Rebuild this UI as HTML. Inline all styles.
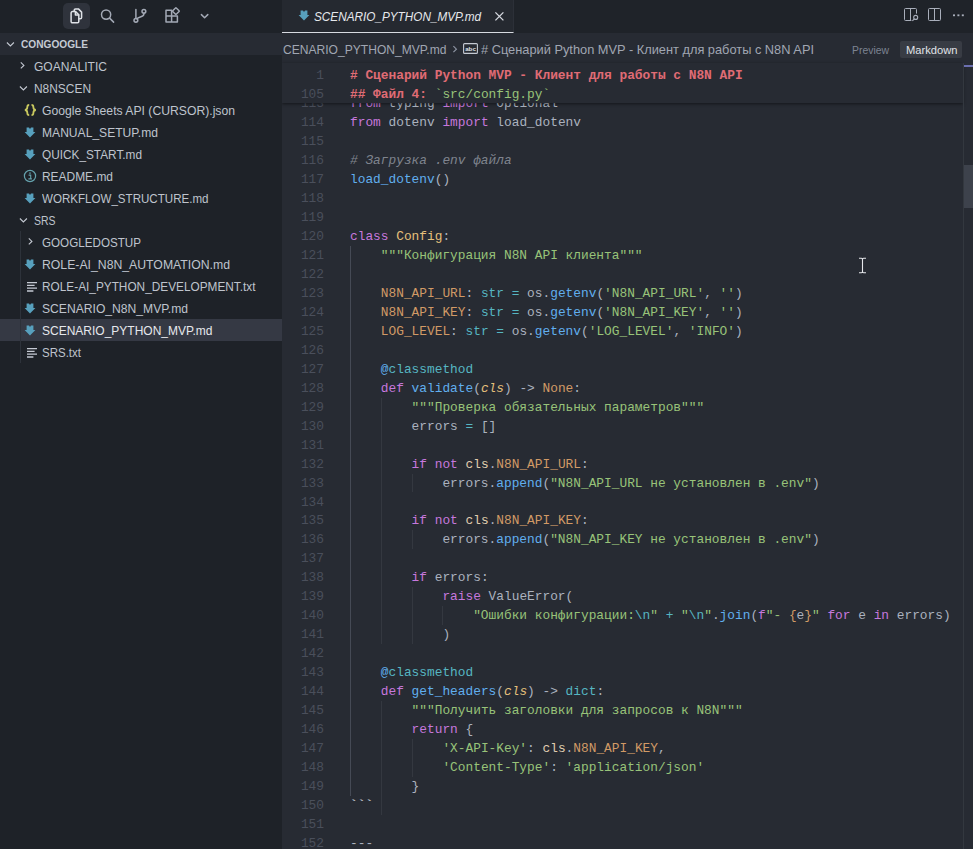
<!DOCTYPE html>
<html lang="en">
<head>
<meta charset="utf-8">
<title>SCENARIO_PYTHON_MVP.md</title>
<style>
*{box-sizing:border-box;margin:0;padding:0}
html,body{width:973px;height:849px;overflow:hidden;background:#272b33}
body{position:relative;font-family:"Liberation Sans",sans-serif;color:#abb2bf}
#side{position:absolute;left:0;top:0;width:282px;height:849px;background:#1e2228;overflow:hidden}
#acts{position:absolute;left:0;top:0;width:282px;height:33px;background:#1e2228}
#acts .sel{position:absolute;left:63px;top:3px;width:27px;height:26px;border-radius:5px;background:#2f333c}
#acts svg{position:absolute}
#hdr{position:absolute;left:0;top:33px;width:282px;height:22px;background:#272b33}
#hdr svg{position:absolute}
#hdr span{position:absolute;left:20.5px;top:0;line-height:22px;font-size:11px;font-weight:bold;color:#c5cad3;white-space:nowrap}
.row{position:absolute;left:0;width:282px;height:22px;line-height:22px;font-size:13px;color:#bfc4cd;white-space:nowrap}
.row.sel{background:#353944;color:#e6e8ec}
.row .lbl{position:absolute;top:1px}
.row svg{position:absolute}
.guide{position:absolute;width:1px;background:#2d323a}
#ed{position:absolute;left:282px;top:0;width:691px;height:849px;background:#272b33;overflow:hidden}
#tabs{position:absolute;left:0;top:0;width:691px;height:33px;background:#1f2329}
#tab{position:absolute;left:0;top:0;width:232px;height:33px;background:#252930;border-right:1px solid #2c3038;border-bottom:1px solid #d7dae0}
#tab svg{position:absolute}
#tab .name{position:absolute;left:32px;top:0;line-height:33px;font-size:13px;font-style:italic;color:#e6e8ec;white-space:nowrap}
#crumbs{position:absolute;left:0;top:33px;width:691px;height:30px;background:#272b33;font-size:13px;color:#a0a6b2;white-space:nowrap}
#crumbs span{position:absolute;top:1.5px;line-height:30px}
.code{font-family:"Liberation Mono",monospace;font-size:12.83px;line-height:19px;white-space:pre}
.ln{position:absolute;left:0;width:42px;text-align:right;color:#4a4f5b;height:19px}
.cl{position:absolute;left:68px;height:19px;color:#abb2bf}
#scroll{position:absolute;left:0;top:0;width:691px;height:849px}
#sticky{position:absolute;left:0;top:63px;width:681px;height:40px;background:#272b33;box-shadow:0 1px 3px rgba(0,0,0,.5)}
.ig{position:absolute;width:1px;background:#343840}
#sb{position:absolute;left:681px;top:63px;width:10px;height:786px;border-left:1px solid #33383f}
#sb .mark{position:absolute;left:0;top:2px;width:10px;height:2px;background:#6b6fb0}
#sb .thumb{position:absolute;left:0;top:102px;width:10px;height:43px;background:#3d424c}
#ibeam{position:absolute;left:576px;top:256.5px}
.k{color:#c678dd}.y{color:#e5c07b}.s{color:#98c379}.f{color:#61afef}.o{color:#d19a66}
.c{color:#7f848e;font-style:italic}.r{color:#e06c75}.t{color:#56b6c2}.i{color:#e5c07b;font-style:italic}
.h{color:#e06c75;font-weight:bold}.cl2{color:#e0ceb0}
</style>
</head>
<body>
<div id="side">
<div id="acts"><div class="sel"></div>
<svg style="left:0;top:0" width="282" height="33" viewBox="0 0 282 33" fill="none" stroke-linecap="round" stroke-linejoin="round">
<g stroke="#dfe2e7" stroke-width="1.5">
<path d="M74.2 11.2 V10.2 A1.3 1.3 0 0 1 75.5 8.9 H78.4 L81.6 12.1 V17.5 A1.3 1.3 0 0 1 80.3 18.8 H79.2"/>
<path d="M72.4 11.6 H75.6 L78.8 14.8 V21.5 A1.3 1.3 0 0 1 77.5 22.8 H72.4 A1.3 1.3 0 0 1 71.1 21.5 V12.9 A1.3 1.3 0 0 1 72.4 11.6 Z"/>
<path d="M75.4 11.8 V15 H78.6"/>
</g>
<g stroke="#a3a9b5" stroke-width="1.5">
<circle cx="106.1" cy="14.6" r="4.6"/><path d="M109.6 18.1 L113.6 22.1"/>
<circle cx="135.9" cy="20.3" r="1.9"/><circle cx="143.9" cy="11.3" r="1.9"/>
<path d="M135.9 18.4 V9.6 M143.9 13.2 V14 C143.9 17.4 138.4 16.4 137 18.8"/>
<path d="M166 10.2 H171.6 V22 H166 Z M166 16 H177.4 V22 H171.6"/>
<rect x="173.4" y="8.6" width="5" height="5" rx="0.5" transform="rotate(45 175.9 11.1)"/>
<path d="M201.4 14.6 L204.6 17.8 L207.8 14.6"/>
</g>
</svg>
</div>
<div id="hdr"><svg style="left:3px;top:3px" width="16" height="16" viewBox="0 0 16 16"><path d="M3.9 6.5 L7.4 9.9 L10.9 6.5" fill="none" stroke="#c5cad3" stroke-width="1.1"/></svg><span id="h0" style="display:inline-block;transform-origin:0 50%;transform:scaleX(0.9212);">CONGOOGLE</span></div>
<div class="row" style="top:55px"><svg style="left:16px;top:3px" width="16" height="16" viewBox="0 0 16 16"><path d="M4.8 4.4 L7.9 7.4 L4.8 10.4" fill="none" stroke="#c5cad3" stroke-width="1.1"/></svg><span class="lbl" id="r0" style="left:34px;display:inline-block;transform-origin:0 50%;transform:scaleX(0.9270);">GOANALITIC</span></div>
<div class="row" style="top:77px"><svg style="left:16px;top:3px" width="16" height="16" viewBox="0 0 16 16"><path d="M3.9 6.5 L7.4 9.9 L10.9 6.5" fill="none" stroke="#c5cad3" stroke-width="1.1"/></svg><span class="lbl" id="r1" style="left:34px;display:inline-block;transform-origin:0 50%;transform:scaleX(0.9175);">N8NSCEN</span></div>
<div class="row" style="top:99px"><svg style="left:23px;top:4px" width="15" height="14" viewBox="0 0 15 14"><path d="M6.2 1.9 C4.4 1.9 4.3 2.7 4.3 4.3 C4.3 6 3.6 6.8 1.9 7 C3.6 7.2 4.3 8 4.3 9.7 C4.3 11.3 4.4 12.1 6.2 12.1 M8.5 1.9 C10.3 1.9 10.4 2.7 10.4 4.3 C10.4 6 11.1 6.8 12.8 7 C11.1 7.2 10.4 8 10.4 9.7 C10.4 11.3 10.3 12.1 8.5 12.1" fill="none" stroke="#c9c95f" stroke-width="1.8"/></svg><span class="lbl" id="r2" style="left:42px;display:inline-block;transform-origin:0 50%;transform:scaleX(0.9372);">Google Sheets API (CURSOR).json</span></div>
<div class="row" style="top:121px"><svg style="left:24px;top:5.5px" width="12" height="11" viewBox="0 0 12 12" preserveAspectRatio="none"><path d="M2.6 0.6 H5 L6 2.2 L7 0.6 H9.4 V5.4 H11.4 L6 11.4 L0.6 5.4 H2.6 Z" fill="#57a0bd"/></svg><span class="lbl" id="r3" style="left:42px;display:inline-block;transform-origin:0 50%;transform:scaleX(0.9299);">MANUAL_SETUP.md</span></div>
<div class="row" style="top:143px"><svg style="left:24px;top:5.5px" width="12" height="11" viewBox="0 0 12 12" preserveAspectRatio="none"><path d="M2.6 0.6 H5 L6 2.2 L7 0.6 H9.4 V5.4 H11.4 L6 11.4 L0.6 5.4 H2.6 Z" fill="#57a0bd"/></svg><span class="lbl" id="r4" style="left:42px;display:inline-block;transform-origin:0 50%;transform:scaleX(0.9087);">QUICK_START.md</span></div>
<div class="row" style="top:165px"><svg style="left:23px;top:4px" width="14" height="14" viewBox="0 0 14 14"><circle cx="7" cy="7" r="5.6" fill="none" stroke="#65a2ad" stroke-width="1.2"/><rect x="6.3" y="3.4" width="1.4" height="1.4" fill="#65a2ad"/><path d="M5.6 6.1 H7.7 V9.7 M5.4 9.9 H8.9" fill="none" stroke="#65a2ad" stroke-width="1.1"/></svg><span class="lbl" id="r5" style="left:42px;display:inline-block;transform-origin:0 50%;transform:scaleX(0.9185);">README.md</span></div>
<div class="row" style="top:187px"><svg style="left:24px;top:5.5px" width="12" height="11" viewBox="0 0 12 12" preserveAspectRatio="none"><path d="M2.6 0.6 H5 L6 2.2 L7 0.6 H9.4 V5.4 H11.4 L6 11.4 L0.6 5.4 H2.6 Z" fill="#57a0bd"/></svg><span class="lbl" id="r6" style="left:42px;display:inline-block;transform-origin:0 50%;transform:scaleX(0.8901);">WORKFLOW_STRUCTURE.md</span></div>
<div class="row" style="top:209px"><svg style="left:16px;top:3px" width="16" height="16" viewBox="0 0 16 16"><path d="M3.9 6.5 L7.4 9.9 L10.9 6.5" fill="none" stroke="#c5cad3" stroke-width="1.1"/></svg><span class="lbl" id="r7" style="left:34px;display:inline-block;transform-origin:0 50%;transform:scaleX(0.8042);">SRS</span></div>
<div class="row" style="top:231px"><svg style="left:24px;top:3px" width="16" height="16" viewBox="0 0 16 16"><path d="M4.8 4.4 L7.9 7.4 L4.8 10.4" fill="none" stroke="#c5cad3" stroke-width="1.1"/></svg><span class="lbl" id="r8" style="left:42px;display:inline-block;transform-origin:0 50%;transform:scaleX(0.8957);">GOOGLEDOSTUP</span></div>
<div class="row" style="top:253px"><svg style="left:24px;top:5.5px" width="12" height="11" viewBox="0 0 12 12" preserveAspectRatio="none"><path d="M2.6 0.6 H5 L6 2.2 L7 0.6 H9.4 V5.4 H11.4 L6 11.4 L0.6 5.4 H2.6 Z" fill="#57a0bd"/></svg><span class="lbl" id="r9" style="left:42px;display:inline-block;transform-origin:0 50%;transform:scaleX(0.9418);">ROLE-AI_N8N_AUTOMATION.md</span></div>
<div class="row" style="top:275px"><svg style="left:26px;top:6px" width="12" height="12" viewBox="0 0 12 12"><path d="M1 1.6 H11 M1 4.4 H8.6 M1 7.2 H11 M1 10 H7.4" fill="none" stroke="#c5cad3" stroke-width="1.3"/></svg><span class="lbl" id="r10" style="left:42px;display:inline-block;transform-origin:0 50%;transform:scaleX(0.9094);">ROLE-AI_PYTHON_DEVELOPMENT.txt</span></div>
<div class="row" style="top:297px"><svg style="left:24px;top:5.5px" width="12" height="11" viewBox="0 0 12 12" preserveAspectRatio="none"><path d="M2.6 0.6 H5 L6 2.2 L7 0.6 H9.4 V5.4 H11.4 L6 11.4 L0.6 5.4 H2.6 Z" fill="#57a0bd"/></svg><span class="lbl" id="r11" style="left:42px;display:inline-block;transform-origin:0 50%;transform:scaleX(0.9326);">SCENARIO_N8N_MVP.md</span></div>
<div class="row sel" style="top:319px"><svg style="left:24px;top:5.5px" width="12" height="11" viewBox="0 0 12 12" preserveAspectRatio="none"><path d="M2.6 0.6 H5 L6 2.2 L7 0.6 H9.4 V5.4 H11.4 L6 11.4 L0.6 5.4 H2.6 Z" fill="#57a0bd"/></svg><span class="lbl" id="r12" style="left:42px;display:inline-block;transform-origin:0 50%;transform:scaleX(0.9231);">SCENARIO_PYTHON_MVP.md</span></div>
<div class="row" style="top:341px"><svg style="left:26px;top:6px" width="12" height="12" viewBox="0 0 12 12"><path d="M1 1.6 H11 M1 4.4 H8.6 M1 7.2 H11 M1 10 H7.4" fill="none" stroke="#c5cad3" stroke-width="1.3"/></svg><span class="lbl" id="r13" style="left:42px;display:inline-block;transform-origin:0 50%;transform:scaleX(0.8848);">SRS.txt</span></div>
<div class="guide" style="left:20px;top:231px;height:132px"></div>
</div>
<div id="ed">
<div id="tabs"><div id="tab"><svg style="left:16px;top:9.5px" width="12" height="11" viewBox="0 0 12 12" preserveAspectRatio="none"><path d="M2.6 0.6 H5 L6 2.2 L7 0.6 H9.4 V5.4 H11.4 L6 11.4 L0.6 5.4 H2.6 Z" fill="#57a0bd"/></svg><svg style="position:absolute;left:210px;top:9px" width="14" height="14" viewBox="0 0 14 14"><path d="M3.4 3.4 L11.4 11.4 M11.4 3.4 L3.4 11.4" stroke="#d7dae0" stroke-width="1.3" fill="none"/></svg><span class="name" id="t0" style="display:inline-block;transform-origin:0 50%;transform:scaleX(0.9042);">SCENARIO_PYTHON_MVP.md</span></div>
<svg style="position:absolute;left:621px;top:7px" width="16" height="16" viewBox="0 0 16 16"><path d="M13.5 6.6 V2.5 Q13.5 1.5 12.5 1.5 H2.5 Q1.5 1.5 1.5 2.5 V12.5 Q1.5 13.5 2.5 13.5 H8.4 M7.5 1.5 V13.5" fill="none" stroke="#a9afbb" stroke-width="1"/><circle cx="12.7" cy="10.4" r="2" fill="none" stroke="#a9afbb" stroke-width="1.1"/><path d="M11.3 11.8 L9.4 13.9" stroke="#a9afbb" stroke-width="1.1"/></svg>
<svg style="position:absolute;left:645px;top:7px" width="16" height="16" viewBox="0 0 16 16"><path d="M2.5 1.5 H12.5 Q13.5 1.5 13.5 2.5 V12.5 Q13.5 13.5 12.5 13.5 H2.5 Q1.5 13.5 1.5 12.5 V2.5 Q1.5 1.5 2.5 1.5 Z M7.5 1.5 V13.5" fill="none" stroke="#a9afbb" stroke-width="1"/></svg>
<svg style="position:absolute;left:669px;top:7px" width="16" height="16" viewBox="0 0 16 16"><rect x="2" y="7.4" width="2" height="1.8" fill="#a9afbb"/><rect x="6.4" y="7.4" width="2" height="1.8" fill="#a9afbb"/><rect x="10.8" y="7.4" width="2" height="1.8" fill="#a9afbb"/></svg>
</div>
<div id="crumbs"><span id="c0" style="left:1px;display:inline-block;transform-origin:0 50%;transform:scaleX(0.9288);">CENARIO_PYTHON_MVP.md</span><svg style="position:absolute;left:166px;top:9px" width="14" height="14" viewBox="0 0 14 14"><path d="M5.4 4.2 L8.4 7.2 L5.4 10.2" fill="none" stroke="#8b92a0" stroke-width="1.2"/></svg><svg style="position:absolute;left:181px;top:9px" width="15" height="13" viewBox="0 0 15 13"><rect x="0.6" y="1.6" width="13.8" height="9.8" rx="1" fill="none" stroke="#c5cad3" stroke-width="1.1"/><text x="7.5" y="9" font-family="Liberation Sans" font-size="6.2" font-weight="bold" text-anchor="middle" fill="#dfe2e7">abc</text></svg><span id="c1" style="left:199px;display:inline-block;transform-origin:0 50%;transform:scaleX(0.9850);"># Сценарий Python MVP - Клиент для работы с N8N API</span><span id="c2" style="left:570px;font-size:11px;color:#7d8492;display:inline-block;transform-origin:0 50%;transform:scaleX(0.9457);">Preview</span><div style="position:absolute;left:618px;top:7.5px;width:62px;height:17px;border-radius:2px;background:#383c44"></div><span id="c3" style="left:623.5px;font-size:11px;color:#e0e3e8;display:inline-block;transform-origin:0 50%;transform:scaleX(1.0148);">Markdown</span></div>
<div id="scroll" class="code">
<div class="ln" style="top:94.03px">113</div><div class="cl" style="top:94.03px"><span class="k">from</span> typing <span class="k">import</span> Optional</div>
<div class="ln" style="top:113.0px">114</div><div class="cl" style="top:113.0px"><span class="k">from</span> dotenv <span class="k">import</span> load_dotenv</div>
<div class="ln" style="top:131.97px">115</div><div class="cl" style="top:131.97px"></div>
<div class="ln" style="top:150.95px">116</div><div class="cl" style="top:150.95px"><span class="c"># Загрузка .env файла</span></div>
<div class="ln" style="top:169.93px">117</div><div class="cl" style="top:169.93px"><span class="f">load_dotenv</span>()</div>
<div class="ln" style="top:188.9px">118</div><div class="cl" style="top:188.9px"></div>
<div class="ln" style="top:207.88px">119</div><div class="cl" style="top:207.88px"></div>
<div class="ln" style="top:226.85px">120</div><div class="cl" style="top:226.85px"><span class="k">class</span> <span class="y">Config</span>:</div>
<div class="ln" style="top:245.83px">121</div><div class="cl" style="top:245.83px">    <span class="s">&quot;&quot;&quot;Конфигурация N8N API клиента&quot;&quot;&quot;</span></div>
<div class="ln" style="top:264.8px">122</div><div class="cl" style="top:264.8px"></div>
<div class="ln" style="top:283.77px">123</div><div class="cl" style="top:283.77px">    <span class="o">N8N_API_URL</span>: <span class="t">str</span> <span class="t">=</span> os.<span class="f">getenv</span>(<span class="s">&#x27;N8N_API_URL&#x27;</span>, <span class="s">&#x27;&#x27;</span>)</div>
<div class="ln" style="top:302.75px">124</div><div class="cl" style="top:302.75px">    <span class="o">N8N_API_KEY</span>: <span class="t">str</span> <span class="t">=</span> os.<span class="f">getenv</span>(<span class="s">&#x27;N8N_API_KEY&#x27;</span>, <span class="s">&#x27;&#x27;</span>)</div>
<div class="ln" style="top:321.73px">125</div><div class="cl" style="top:321.73px">    <span class="o">LOG_LEVEL</span>: <span class="t">str</span> <span class="t">=</span> os.<span class="f">getenv</span>(<span class="s">&#x27;LOG_LEVEL&#x27;</span>, <span class="s">&#x27;INFO&#x27;</span>)</div>
<div class="ln" style="top:340.7px">126</div><div class="cl" style="top:340.7px"></div>
<div class="ln" style="top:359.68px">127</div><div class="cl" style="top:359.68px">    <span class="f">@</span><span class="t">classmethod</span></div>
<div class="ln" style="top:378.65px">128</div><div class="cl" style="top:378.65px">    <span class="k">def</span> <span class="f">validate</span>(<span class="i">cls</span>) -&gt; <span class="o">None</span>:</div>
<div class="ln" style="top:397.62px">129</div><div class="cl" style="top:397.62px">        <span class="s">&quot;&quot;&quot;Проверка обязательных параметров&quot;&quot;&quot;</span></div>
<div class="ln" style="top:416.6px">130</div><div class="cl" style="top:416.6px">        errors <span class="t">=</span> []</div>
<div class="ln" style="top:435.58px">131</div><div class="cl" style="top:435.58px"></div>
<div class="ln" style="top:454.55px">132</div><div class="cl" style="top:454.55px">        <span class="k">if</span> <span class="k">not</span> <span class="cl2">cls</span>.<span class="o">N8N_API_URL</span>:</div>
<div class="ln" style="top:473.53px">133</div><div class="cl" style="top:473.53px">            errors.<span class="f">append</span>(<span class="s">&quot;N8N_API_URL не установлен в .env&quot;</span>)</div>
<div class="ln" style="top:492.5px">134</div><div class="cl" style="top:492.5px"></div>
<div class="ln" style="top:511.48px">135</div><div class="cl" style="top:511.48px">        <span class="k">if</span> <span class="k">not</span> <span class="cl2">cls</span>.<span class="o">N8N_API_KEY</span>:</div>
<div class="ln" style="top:530.45px">136</div><div class="cl" style="top:530.45px">            errors.<span class="f">append</span>(<span class="s">&quot;N8N_API_KEY не установлен в .env&quot;</span>)</div>
<div class="ln" style="top:549.42px">137</div><div class="cl" style="top:549.42px"></div>
<div class="ln" style="top:568.4px">138</div><div class="cl" style="top:568.4px">        <span class="k">if</span> errors:</div>
<div class="ln" style="top:587.38px">139</div><div class="cl" style="top:587.38px">            <span class="k">raise</span> ValueError(</div>
<div class="ln" style="top:606.35px">140</div><div class="cl" style="top:606.35px">                <span class="s">&quot;Ошибки конфигурации:</span><span class="t">\n</span><span class="s">&quot;</span> <span class="t">+</span> <span class="s">&quot;</span><span class="t">\n</span><span class="s">&quot;</span>.<span class="f">join</span>(<span class="k">f</span><span class="s">&quot;- </span><span class="o">{</span>e<span class="o">}</span><span class="s">&quot;</span> <span class="k">for</span> e <span class="k">in</span> errors)</div>
<div class="ln" style="top:625.33px">141</div><div class="cl" style="top:625.33px">            )</div>
<div class="ln" style="top:644.3px">142</div><div class="cl" style="top:644.3px"></div>
<div class="ln" style="top:663.28px">143</div><div class="cl" style="top:663.28px">    <span class="f">@</span><span class="t">classmethod</span></div>
<div class="ln" style="top:682.25px">144</div><div class="cl" style="top:682.25px">    <span class="k">def</span> <span class="f">get_headers</span>(<span class="i">cls</span>) -&gt; <span class="t">dict</span>:</div>
<div class="ln" style="top:701.23px">145</div><div class="cl" style="top:701.23px">        <span class="s">&quot;&quot;&quot;Получить заголовки для запросов к N8N&quot;&quot;&quot;</span></div>
<div class="ln" style="top:720.2px">146</div><div class="cl" style="top:720.2px">        <span class="k">return</span> {</div>
<div class="ln" style="top:739.18px">147</div><div class="cl" style="top:739.18px">            <span class="s">&#x27;X-API-Key&#x27;</span>: <span class="cl2">cls</span>.<span class="o">N8N_API_KEY</span>,</div>
<div class="ln" style="top:758.15px">148</div><div class="cl" style="top:758.15px">            <span class="s">&#x27;Content-Type&#x27;</span>: <span class="s">&#x27;application/json&#x27;</span></div>
<div class="ln" style="top:777.12px">149</div><div class="cl" style="top:777.12px">        }</div>
<div class="ln" style="top:796.1px">150</div><div class="cl" style="top:796.1px"><b style="color:#c3c8d0">```</b></div>
<div class="ln" style="top:815.08px">151</div><div class="cl" style="top:815.08px"></div>
<div class="ln" style="top:834.05px">152</div><div class="cl" style="top:834.05px">---</div>
<div class="ln" style="top:853.03px">153</div><div class="cl" style="top:853.03px"></div>
<div class="ig" style="left:68.0px;top:245.83px;height:550.28px;background:#454a55"></div>
<div class="ig" style="left:98.8px;top:397.62px;height:246.68px"></div>
<div class="ig" style="left:129.6px;top:473.53px;height:18.98px"></div>
<div class="ig" style="left:129.6px;top:530.45px;height:18.98px"></div>
<div class="ig" style="left:129.6px;top:587.38px;height:56.93px"></div>
<div class="ig" style="left:160.4px;top:606.35px;height:18.98px"></div>
<div class="ig" style="left:98.8px;top:701.23px;height:113.85px"></div>
<div class="ig" style="left:129.6px;top:739.18px;height:37.95px"></div>
</div>
<div id="sticky" class="code"><div class="ln" style="top:3px">1</div><div class="cl" style="top:3px"><span class="h"># Сценарий Python MVP - Клиент для работы с N8N API</span></div><div class="ln" style="top:22px">105</div><div class="cl" style="top:22px"><span class="h">## Файл 4: </span><span class="s">`src/config.py`</span></div></div>
<div id="sb"><div class="mark"></div><div class="thumb"></div></div>
<svg id="ibeam" width="9" height="17" viewBox="0 0 9 17"><path d="M1 1.2 H3.4 Q4.5 1.2 4.5 2.4 Q4.5 1.2 5.6 1.2 H8 M1 15.8 H3.4 Q4.5 15.8 4.5 14.6 Q4.5 15.8 5.6 15.8 H8 M4.5 2.4 V14.6" fill="none" stroke="#e6e8ec" stroke-width="1.1"/></svg>
</div>
</body>
</html>
